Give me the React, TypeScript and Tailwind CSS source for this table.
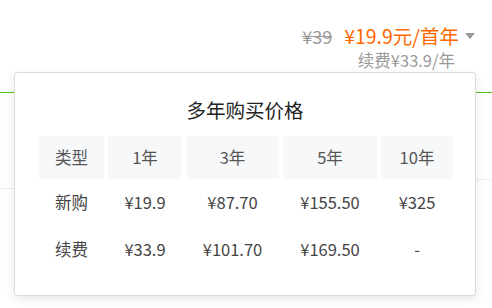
const years = ["1年", "3年", "5年", "10年"];

const rows = [
  { type: "新购", prices: ["¥19.9", "¥87.70", "¥155.50", "¥325"] },
  { type: "续费", prices: ["¥33.9", "¥101.70", "¥169.50", "-"] },
];

const cols = "grid grid-cols-[65px_74px_93px_94px_72px] gap-x-[4px]";

export default function App() {
  return (
    <div
      className="relative h-[308px] w-[492px] overflow-hidden bg-white"
      style={{ fontFamily: '"Noto Sans CJK SC", "Noto Sans", sans-serif' }}
    >
      {/* price summary */}
      <div className="flex flex-col items-end pr-[17px] pt-[22px]">
        <div className="flex h-[28px] items-center">
          <span className="text-[18px] leading-none text-[#999] line-through">¥39</span>
          <span className="ml-[12px] text-[19.5px] leading-none text-[#ff6a00]">¥19.9元/首年</span>
          <svg className="ml-[6px]" width="10" height="6" viewBox="0 0 10 6">
            <path d="M0 0h10L5 6z" fill="#999" />
          </svg>
        </div>
        <div className="mr-[20px] text-[16.5px] leading-[20px] text-[#999]">续费¥33.9/年</div>
      </div>

      {/* page behind the dropdown */}
      <div className="mt-[22px] h-px bg-[#52c41a]" />
      <div className="flex">
        <div className="h-[96px] flex-1 border-b border-[#eee]" />
        <div className="h-[87px] flex-1 border-b border-[#eee]" />
      </div>

      {/* dropdown */}
      <div className="absolute left-[14px] top-[72px] h-[224px] w-[462px] rounded-[3px] border border-[#ddd] bg-white shadow-[0_3px_10px_rgba(0,0,0,0.10)]">
        <div className="pt-[25px] text-center text-[19.5px] leading-[24px] text-[#222]">多年购买价格</div>
        <div className="ml-[24px] mt-[14px] w-[414px] text-center text-[16.5px]">
          <div className={cols}>
            <div className="flex h-[43px] items-center justify-center bg-[#f7f8fa] text-[#555]">类型</div>
            {years.map((y) => (
              <div key={y} className="flex h-[43px] items-center justify-center bg-[#f7f8fa] text-[#555]">
                {y}
              </div>
            ))}
          </div>
          {rows.map((r) => (
            <div key={r.type} className={cols}>
              <div className="flex h-[47px] items-center justify-center text-[#444]">{r.type}</div>
              {r.prices.map((p, i) => (
                <div key={i} className="flex h-[47px] items-center justify-center text-[#444]">
                  {p}
                </div>
              ))}
            </div>
          ))}
        </div>
      </div>
    </div>
  );
}
